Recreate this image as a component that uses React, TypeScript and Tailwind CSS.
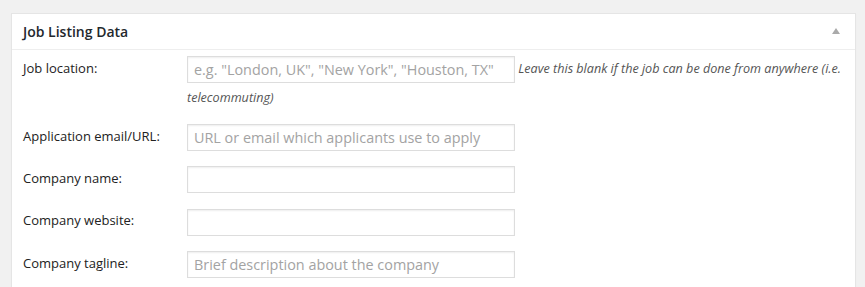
import { ReactNode } from 'react'

type Field = {
  label: string
  placeholder?: string
  help?: string
}

const fields: Field[] = [
  {
    label: 'Job location:',
    placeholder: 'e.g. "London, UK", "New York", "Houston, TX"',
    help: 'Leave this blank if the job can be done from anywhere (i.e. telecommuting)',
  },
  { label: 'Application email/URL:', placeholder: 'URL or email which applicants use to apply' },
  { label: 'Company name:' },
  { label: 'Company website:' },
  { label: 'Company tagline:', placeholder: 'Brief description about the company' },
]

function Row({ field, className }: { field: Field; className?: string }): ReactNode {
  return (
    <div className={`flex ${className ?? ''}`}>
      <label className="w-[164px] shrink-0 text-[13px] leading-[29px] text-[#222]">{field.label}</label>
      <div className="flex-1 text-[12.6px] leading-[29px]">
        <input
          type="text"
          placeholder={field.placeholder}
          className="inline-block h-[27px] w-[328px] border border-[#dddddd] bg-white px-[6px] align-middle text-[14.4px] text-[#333] shadow-[inset_0_1px_2px_rgba(0,0,0,0.07)] outline-none placeholder:text-[#a3a3a3]"
        />
        {field.help && <span className="italic text-[#555]"> {field.help}</span>}
      </div>
    </div>
  )
}

export default function App() {
  return (
    <div className="h-[287px] overflow-hidden bg-[#f1f1f1] pl-[11px] pt-[13px] font-['Open_Sans',sans-serif]">
      <div className="w-[845px] border border-[#e5e5e5] bg-white shadow-[0_1px_1px_rgba(0,0,0,0.04)]">
        <div className="flex h-[36px] items-center justify-between border-b border-[#eeeeee] pl-[11px] pr-[15px]">
          <h2 className="text-[14px] font-semibold text-[#23282d]">Job Listing Data</h2>
          <svg width="8" height="6" viewBox="0 0 8 6" className="mt-[-2px] text-[#aaaaaa]">
            <polygon points="4,0 8,6 0,6" fill="currentColor" />
          </svg>
        </div>
        <div className="pl-[11px] pr-[12px] pt-[4px]">
          {fields.map((field, i) => (
            <Row key={field.label} field={field} className={i === 0 ? 'mb-[10px]' : 'mb-[13px]'} />
          ))}
        </div>
      </div>
    </div>
  )
}
